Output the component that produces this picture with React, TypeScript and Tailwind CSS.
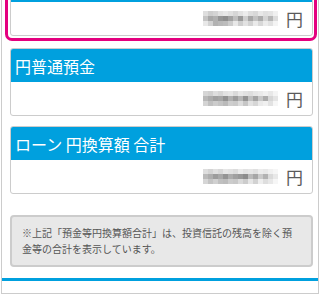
const font = "font-['Noto_Sans_CJK_JP','Noto_Sans',sans-serif]"

const mosaics: number[][][] = [
  [
    [222, 206, 212, 226, 232, 224, 214, 226, 236, 222, 216, 232, 224, 228, 240],
    [196, 168, 176, 150, 142, 162, 190, 154, 206, 166, 194, 172, 212, 182, 220],
    [232, 210, 178, 184, 188, 204, 232, 206, 226, 210, 234, 216, 236, 226, 244],
  ],
  [
    [214, 208, 222, 214, 226, 230, 218, 232, 226, 222, 230, 234, 240, 232, 244],
    [184, 172, 160, 166, 146, 176, 156, 182, 148, 192, 164, 200, 172, 214, 228],
    [212, 192, 204, 196, 186, 206, 202, 220, 198, 226, 214, 234, 240, 226, 246],
  ],
  [
    [222, 212, 224, 216, 230, 226, 220, 234, 226, 230, 224, 236, 232, 240, 246],
    [186, 174, 156, 168, 148, 172, 160, 152, 140, 186, 166, 202, 178, 218, 232],
    [214, 196, 208, 192, 188, 204, 200, 218, 204, 230, 210, 238, 222, 232, 246],
  ],
]

const Mosaic = ({ rows }: { rows: number[][] }) => (
  <svg width="75" height="15" viewBox="0 0 75 15" className="block">
    {rows.map((row, r) =>
      row.map((v, c) => (
        <rect key={`${r}-${c}`} x={c * 5} y={r * 5} width="5" height="5" fill={`rgb(${v},${v},${v})`} />
      )),
    )}
  </svg>
)

const BalanceCard = ({ title, mosaic }: { title: string; mosaic: number[][] }) => (
  <div className="overflow-hidden rounded-[3px] border border-[#cccccc] bg-white">
    <div className="flex h-[33px] items-center bg-[#00a0de] px-[4px] text-[16px] leading-none text-white">{title}</div>
    <div className="flex h-[33px] items-center justify-end gap-[8px] pr-[9px]">
      <Mosaic rows={mosaic} />
      <span className="text-[17px] leading-none text-[#5a5a5a]">円</span>
    </div>
  </div>
)

const App = () => {
  return (
    <div className={`h-[295px] overflow-hidden bg-white ${font}`}>
      <div className="mx-px flex h-[294px] flex-col overflow-hidden border-x border-b border-[#cccccc]">
        <div className="-mt-[37px] pl-2 pr-[5px]">
          <div className="-ml-[5px] -mr-[4px] rounded-[7px] border-[3px] border-[#e4007f] pb-[2px] pl-[2px] pr-px pt-[2px]">
            <BalanceCard title="" mosaic={mosaics[0]} />
          </div>
          <div className="mt-[7px]">
            <BalanceCard title="円普通預金" mosaic={mosaics[1]} />
          </div>
          <div className="mt-[10px]">
            <BalanceCard title="ローン 円換算額 合計" mosaic={mosaics[2]} />
          </div>
          <div className="mt-[21px] rounded-[4px] border-2 border-[#cccccc] bg-[#e8e8e8] px-[10px] py-[8px] text-[10px] leading-[16px] text-[#555555]">
            ※上記「預金等円換算額合計」は、投資信託の残高を除く預金等の合計を表示しています。
          </div>
        </div>
        <div className="mt-[11px] h-[3px] shrink-0 bg-[#00a0de]" />
      </div>
    </div>
  )
}

export default App
